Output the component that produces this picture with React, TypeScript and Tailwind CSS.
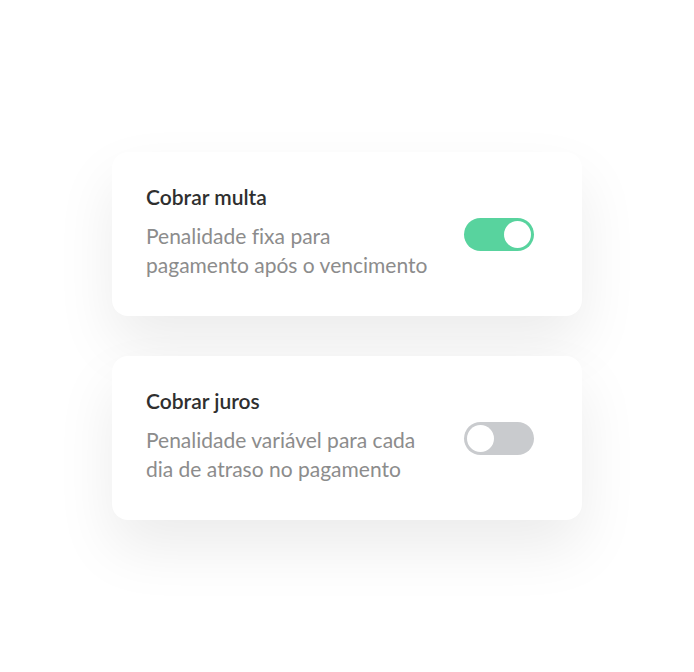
import { useState } from "react";

type Row = {
  title: string;
  lines: [string, string];
  on: boolean;
};

const rows: Row[] = [
  {
    title: "Cobrar multa",
    lines: ["Penalidade fixa para", "pagamento após o vencimento"],
    on: true,
  },
  {
    title: "Cobrar juros",
    lines: ["Penalidade variável para cada", "dia de atraso no pagamento"],
    on: false,
  },
];

function Toggle({ on, onClick }: { on: boolean; onClick: () => void }) {
  return (
    <button
      type="button"
      role="switch"
      aria-checked={on}
      onClick={onClick}
      className={
        on
          ? "flex h-[33px] w-[70px] shrink-0 items-center justify-end rounded-full bg-[#58d39e] px-[3px]"
          : "flex h-[33px] w-[70px] shrink-0 items-center justify-start rounded-full bg-[#c9cbce] px-[3px]"
      }
    >
      <span className="block h-[27px] w-[27px] rounded-full bg-white" />
    </button>
  );
}

function SettingCard({ row }: { row: Row }) {
  const [on, setOn] = useState(row.on);
  return (
    <div className="flex h-[164px] w-[470px] items-center justify-between rounded-2xl bg-white pl-[34px] pr-[48px] shadow-[0_28px_60px_rgba(0,0,0,0.08)]">
      <div className="mb-[4px] flex flex-col gap-[12px]">
        <h3 className="text-[21px] font-semibold leading-6 text-[#2f2f2f]">
          {row.title}
        </h3>
        <p className="text-[21px] leading-[29px] text-[#8c8c8c]">
          {row.lines[0]}
          <br />
          {row.lines[1]}
        </p>
      </div>
      <Toggle on={on} onClick={() => setOn((v) => !v)} />
    </div>
  );
}

export default function App() {
  return (
    <div className="flex min-h-screen flex-col items-center justify-center gap-10 bg-white font-['Lato',sans-serif] [font-variant-ligatures:none]">
      {rows.map((row) => (
        <SettingCard key={row.title} row={row} />
      ))}
    </div>
  );
}
